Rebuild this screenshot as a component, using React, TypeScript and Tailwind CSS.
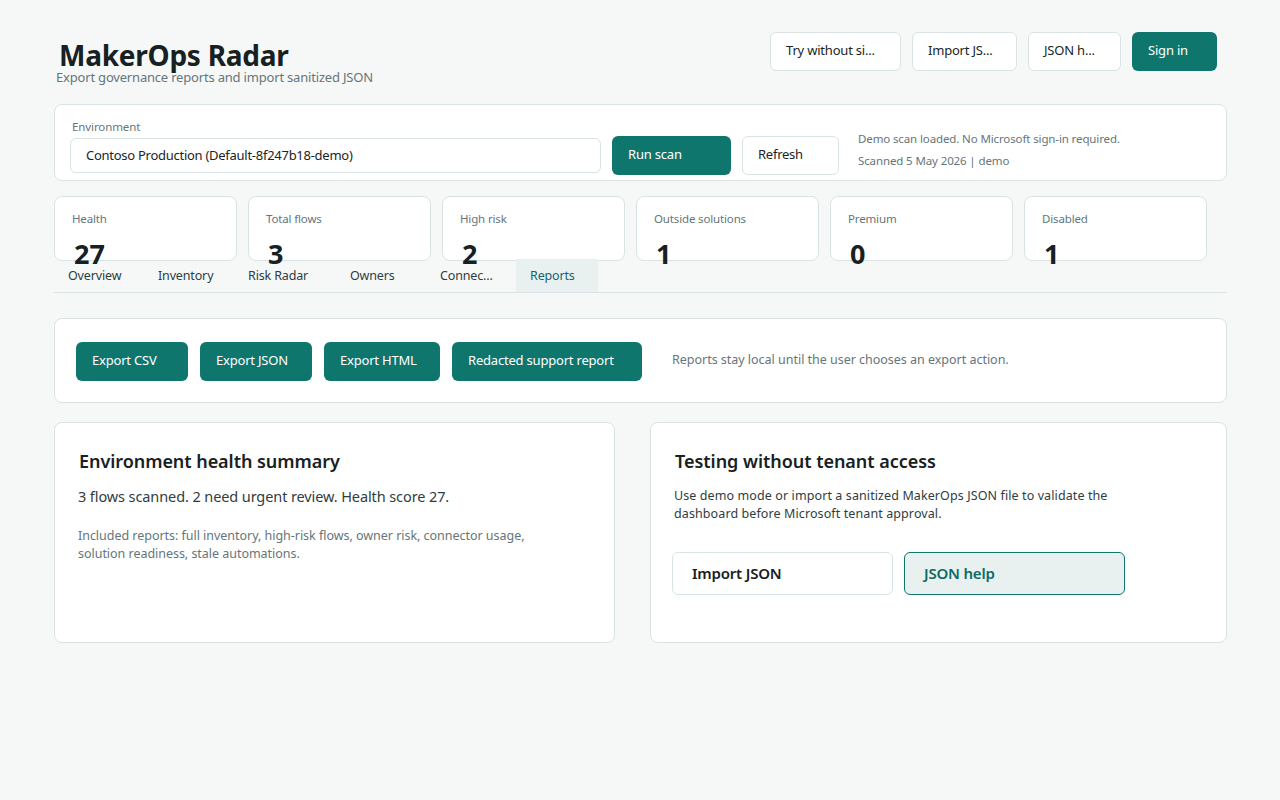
const font = { fontFamily: '"Noto Sans", "Open Sans", sans-serif' };

function OutlineButton({ label, width }: { label: string; width: string }) {
  return (
    <button className={`${width} h-[39px] whitespace-nowrap rounded-md border border-[#d9e3e3] bg-white pb-[2px] pl-[15px] text-left text-[13px] tracking-[-0.2px] text-[#1a2526]`}>
      {label}
    </button>
  );
}

function PrimaryButton({ label, width }: { label: string; width: string }) {
  return (
    <button className={`${width} h-[39px] whitespace-nowrap rounded-md bg-[#0f766e] pb-[1px] pl-[16px] text-left text-[13px] tracking-[-0.2px] text-white`}>
      {label}
    </button>
  );
}

const metrics = [
  { label: "Health", value: "27" },
  { label: "Total flows", value: "3" },
  { label: "High risk", value: "2" },
  { label: "Outside solutions", value: "1" },
  { label: "Premium", value: "0" },
  { label: "Disabled", value: "1" },
];

const tabs = [
  { label: "Overview", width: "w-[90px]" },
  { label: "Inventory", width: "w-[90px]" },
  { label: "Risk Radar", width: "w-[102px]" },
  { label: "Owners", width: "w-[90px]" },
  { label: "Connec...", width: "w-[90px]" },
];

export default function App() {
  return (
    <div style={font} className="min-h-[800px] bg-[#f6f8f8] pl-[54px] pr-[53px] pt-[32px] text-[#1a2526]">
      {/* Header */}
      <div className="flex h-[72px] items-start justify-between pr-[10px]">
        <div className="pt-[5px]">
          <h1 className="pl-[5px] text-[28px] font-bold leading-[36px] tracking-[-0.25px] text-[#172122]">MakerOps Radar</h1>
          <p className="-mt-[4px] pl-[2px] text-[13px] leading-[16px] tracking-[-0.19px] text-[#66757a]">Export governance reports and import sanitized JSON</p>
        </div>
        <div className="flex gap-[11px]">
          <OutlineButton label="Try without si..." width="w-[131px]" />
          <OutlineButton label="Import JS..." width="w-[105px]" />
          <OutlineButton label="JSON h..." width="w-[93px]" />
          <PrimaryButton label="Sign in" width="w-[85px]" />
        </div>
      </div>

      {/* Environment */}
      <div className="flex h-[77px] items-start rounded-lg border border-[#d9e3e3] bg-white pl-[15px] pt-[14px]">
        <div className="w-[531px]">
          <label className="block pl-[2px] text-[11.5px] leading-[16px] tracking-[-0.1px] text-[#66757a]">Environment</label>
          <div className="mt-[3px] flex h-[35px] items-center rounded-md border border-[#d9e3e3] bg-white pl-[15px] text-[13px] tracking-[-0.27px] text-[#1a2526]">
            Contoso Production (Default-8f247b18-demo)
          </div>
        </div>
        <div className="ml-[11px] mt-[17px] flex gap-[11px]">
          <PrimaryButton label="Run scan" width="w-[119px]" />
          <button className="h-[39px] w-[97px] rounded-md border border-[#d9e3e3] bg-white pb-[2px] pl-[15px] text-left text-[13px] tracking-[-0.25px]">Refresh</button>
        </div>
        <div className="ml-[19px] mt-[9px] text-[11.5px] leading-[22px] tracking-[-0.12px] text-[#66757a]">
          <p>Demo scan loaded. No Microsoft sign-in required.</p>
          <p>Scanned 5 May 2026 | demo</p>
        </div>
      </div>

      {/* Metrics */}
      <div className="mt-[15px] flex h-[65px] gap-[11px]">
        {metrics.map((m) => (
          <div key={m.label} className="w-[183px] rounded-lg border border-[#d9e3e3] bg-white pl-[17px] pt-[14px]">
            <p className="text-[11.5px] leading-[16px] tracking-[-0.15px] text-[#66757a]">{m.label}</p>
            <p className="mt-[9px] pl-[2px] text-[27px] font-bold leading-[36px] text-[#172122]">{m.value}</p>
          </div>
        ))}
      </div>

      {/* Tabs */}
      <div className="relative -mt-[2px] flex h-[34px] border-b border-[#d9e3e3]">
        {tabs.map((t) => (
          <div key={t.label} className={`${t.width} flex items-center justify-start pl-[14px] pt-[2px] text-[12.5px] tracking-[-0.15px] text-[#2f3d40]`}>{t.label}</div>
        ))}
        <div className="flex w-[82px] items-center bg-[#e8f1f0] pl-[14px] pt-[2px] text-[12.5px] tracking-[-0.15px] text-[#1e5f68]">Reports</div>
      </div>

      {/* Export actions */}
      <div className="mt-[25px] flex h-[85px] items-center rounded-lg border border-[#d9e3e3] bg-white pl-[21px]">
        <div className="mt-[2px] flex gap-[12px]">
          <PrimaryButton label="Export CSV" width="w-[112px]" />
          <PrimaryButton label="Export JSON" width="w-[112px]" />
          <PrimaryButton label="Export HTML" width="w-[116px]" />
          <PrimaryButton label="Redacted support report" width="w-[190px]" />
        </div>
        <p className="ml-[30px] text-[12.5px] tracking-[-0.02px] text-[#66757a]">Reports stay local until the user chooses an export action.</p>
      </div>

      {/* Lower cards */}
      <div className="mt-[19px] flex gap-[35px]">
        <div className="h-[221px] w-[561px] rounded-lg border border-[#d9e3e3] bg-white pl-[23px] pt-[25px]">
          <h2 className="pl-[1px] text-[18px] font-semibold leading-[26px] tracking-[-0.05px] text-[#172122]">Environment health summary</h2>
          <p className="mt-[12px] text-[14.5px] leading-[20px] tracking-[-0.1px] text-[#2f3d40]">3 flows scanned. 2 need urgent review. Health score 27.</p>
          <p className="mt-[21px] w-[470px] text-[12.5px] leading-[18px] tracking-[-0.03px] text-[#66757a]">Included reports: full inventory, high-risk flows, owner risk, connector usage, solution readiness, stale automations.</p>
        </div>
        <div className="h-[221px] w-[577px] rounded-lg border border-[#d9e3e3] bg-white pl-[23px] pt-[25px]">
          <h2 className="pl-[1px] text-[18px] font-semibold leading-[26px] tracking-[-0.03px] text-[#172122]">Testing without tenant access</h2>
          <p className="mt-[13px] w-[450px] text-[12.5px] leading-[18px] tracking-[0.1px] text-[#2f3d40]">Use demo mode or import a sanitized MakerOps JSON file to validate the dashboard before Microsoft tenant approval.</p>
          <div className="-ml-[2px] mt-[29px] flex gap-[11px]">
            <button className="h-[43px] w-[221px] rounded-md border border-[#d9e3e3] bg-white pl-[19px] text-left text-[15px] font-semibold tracking-[-0.2px] text-[#172122]">Import JSON</button>
            <button className="h-[43px] w-[221px] rounded-md border border-[#0f766e] bg-[#e8f1f0] pl-[19px] text-left text-[15px] font-semibold tracking-[-0.2px] text-[#0f6b64]">JSON help</button>
          </div>
        </div>
      </div>
    </div>
  );
}
